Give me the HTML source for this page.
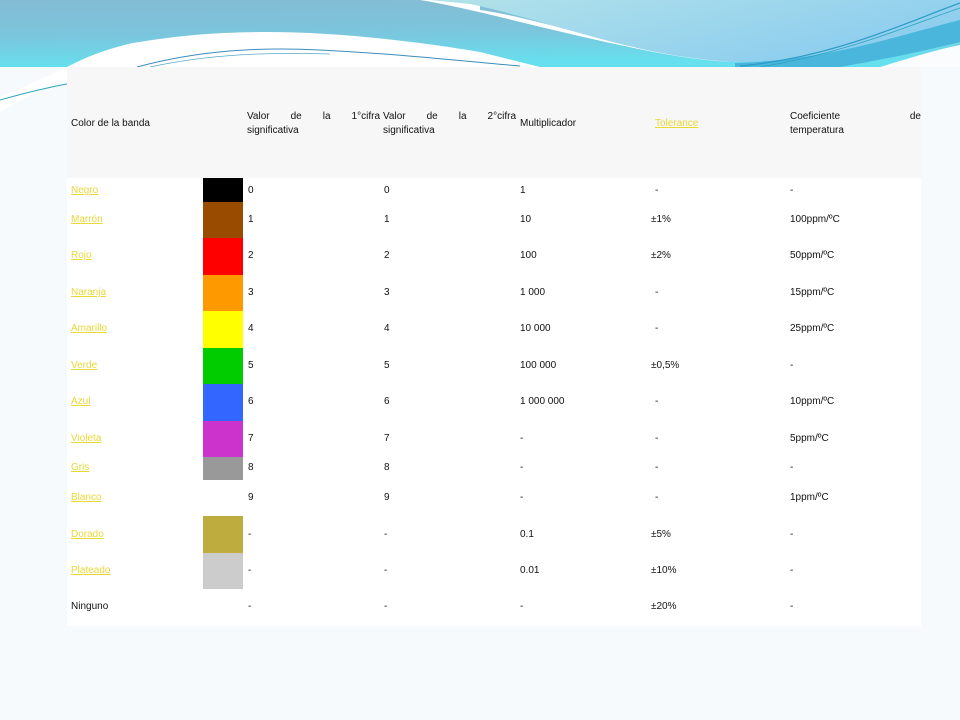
<!DOCTYPE html>
<html><head><meta charset="utf-8"><style>
body{margin:0;width:960px;height:720px;background:#f7fafc;position:relative;overflow:hidden;font-family:"Liberation Sans",sans-serif;font-size:10px;color:#111}
svg{position:absolute;left:0;top:0}
#t{position:absolute;left:67px;top:67px;width:854px;height:559px;background:#fff}
.h{position:absolute;top:0;left:0;width:854px;height:111px;background:#f7f7f7}
.c{position:absolute;white-space:nowrap}
.j{position:absolute;line-height:14px}
.j div:first-child{text-align:justify;text-align-last:justify}
a{color:#e8d838;text-decoration:underline}
.sw{position:absolute;left:136px;width:40px}
.r{position:absolute;font-size:10px}
</style></head><body>
<svg width="960" height="120">
<defs>
<linearGradient id="g1" x1="0" y1="0" x2="0.15" y2="1"><stop offset="0" stop-color="#84bcd4"/><stop offset="0.5" stop-color="#7cc4dc"/><stop offset="1" stop-color="#66e0ee"/></linearGradient>
<linearGradient id="g2" x1="0" y1="0" x2="1" y2="0.5"><stop offset="0" stop-color="#b2e2ea"/><stop offset="1" stop-color="#8ccdee"/></linearGradient>
</defs>
<rect width="960" height="67" fill="url(#g1)"/>
<path d="M0 97 C30 85 50 75 67 67 L67 67 C90 55 110 48 133 43 C180 35 220 32 267 32 C340 32 420 42 480 52 L540 67 L67 67 L67 80 C40 88 20 100 0 112 Z" fill="#fff"/>
<path d="M0 100 C25 93 45 88 67 84" stroke="#2aa8b8" stroke-width="1" fill="none"/>
<path d="M137 67 C200 50 260 47 320 50 C400 54 450 60 520 66" stroke="#3c8cbc" stroke-width="1" fill="none"/>
<path d="M150 67 C210 54 270 52 330 54" stroke="#5aa8cc" stroke-width="0.8" fill="none"/>
<path d="M420 0 C470 8 540 28 620 45 C670 56 700 60 730 62 C700 58 650 50 600 38 C550 25 510 14 480 10 L480 0 Z" fill="#fff"/>
<path d="M430 0 L960 0 L960 28 C900 45 820 62 735 62 C690 60 640 50 590 36 C540 22 500 10 470 4 Z" fill="url(#g2)"/>
<path d="M735 63 C830 60 900 35 960 20 L960 42 C920 52 880 60 840 67 L735 67 Z" fill="#4ab6dc"/>
<path d="M880 67 C910 58 935 50 960 45 L960 67 Z" fill="#fafcfd"/>
<path d="M740 66 C830 58 900 25 960 3" stroke="#2a9cc8" stroke-width="1.2" fill="none"/>
<path d="M760 67 C850 52 910 25 960 8" stroke="#2aa4c0" stroke-width="0.8" fill="none"/>
</svg>
<div id="t">
<div class="h"></div>
<div class="c" style="left:4px;top:51px">Color de la banda</div>
<div class="j" style="left:180px;top:43px;width:133px"><div>Valor de la 1°cifra</div><div>significativa</div></div>
<div class="j" style="left:316px;top:43px;width:133px"><div>Valor de la 2°cifra</div><div>significativa</div></div>
<div class="c" style="left:453px;top:51px">Multiplicador</div>
<div class="c" style="left:588px;top:51px"><a>Tolerance</a></div>
<div class="j" style="left:723px;top:43px;width:131px"><div>Coeficiente de</div><div>temperatura</div></div>

<div class="sw" style="top:111px;height:24px;background:#000"></div>
<div class="sw" style="top:135px;height:36px;background:#994c00"></div>
<div class="sw" style="top:171px;height:37px;background:#ff0000"></div>
<div class="sw" style="top:208px;height:36px;background:#ff9900"></div>
<div class="sw" style="top:244px;height:37px;background:#ffff00"></div>
<div class="sw" style="top:281px;height:36px;background:#00cc00"></div>
<div class="sw" style="top:317px;height:37px;background:#3366ff"></div>
<div class="sw" style="top:354px;height:36px;background:#cc33cc"></div>
<div class="sw" style="top:390px;height:23px;background:#999999"></div>
<div class="sw" style="top:449px;height:37px;background:#bfac3f"></div>
<div class="sw" style="top:486px;height:36px;background:#cccccc"></div>
</div>
<div class="r" style="top:185px;left:71px"><a>Negro</a></div><div class="r" style="top:185px;left:248px">0</div><div class="r" style="top:185px;left:384px">0</div><div class="r" style="top:185px;left:520px">1</div><div class="r" style="top:185px;left:655px">-</div><div class="r" style="top:185px;left:790px">-</div>
<div class="r" style="top:214px;left:71px"><a>Marrón</a></div><div class="r" style="top:214px;left:248px">1</div><div class="r" style="top:214px;left:384px">1</div><div class="r" style="top:214px;left:520px">10</div><div class="r" style="top:214px;left:651px">±1%</div><div class="r" style="top:214px;left:790px">100ppm/ºC</div>
<div class="r" style="top:250px;left:71px"><a>Rojo</a></div><div class="r" style="top:250px;left:248px">2</div><div class="r" style="top:250px;left:384px">2</div><div class="r" style="top:250px;left:520px">100</div><div class="r" style="top:250px;left:651px">±2%</div><div class="r" style="top:250px;left:790px">50ppm/ºC</div>
<div class="r" style="top:287px;left:71px"><a>Naranja</a></div><div class="r" style="top:287px;left:248px">3</div><div class="r" style="top:287px;left:384px">3</div><div class="r" style="top:287px;left:520px">1 000</div><div class="r" style="top:287px;left:655px">-</div><div class="r" style="top:287px;left:790px">15ppm/ºC</div>
<div class="r" style="top:323px;left:71px"><a>Amarillo</a></div><div class="r" style="top:323px;left:248px">4</div><div class="r" style="top:323px;left:384px">4</div><div class="r" style="top:323px;left:520px">10 000</div><div class="r" style="top:323px;left:655px">-</div><div class="r" style="top:323px;left:790px">25ppm/ºC</div>
<div class="r" style="top:360px;left:71px"><a>Verde</a></div><div class="r" style="top:360px;left:248px">5</div><div class="r" style="top:360px;left:384px">5</div><div class="r" style="top:360px;left:520px">100 000</div><div class="r" style="top:360px;left:651px">±0,5%</div><div class="r" style="top:360px;left:790px">-</div>
<div class="r" style="top:396px;left:71px"><a>Azul</a></div><div class="r" style="top:396px;left:248px">6</div><div class="r" style="top:396px;left:384px">6</div><div class="r" style="top:396px;left:520px">1 000 000</div><div class="r" style="top:396px;left:655px">-</div><div class="r" style="top:396px;left:790px">10ppm/ºC</div>
<div class="r" style="top:433px;left:71px"><a>Violeta</a></div><div class="r" style="top:433px;left:248px">7</div><div class="r" style="top:433px;left:384px">7</div><div class="r" style="top:433px;left:520px">-</div><div class="r" style="top:433px;left:655px">-</div><div class="r" style="top:433px;left:790px">5ppm/ºC</div>
<div class="r" style="top:462px;left:71px"><a>Gris</a></div><div class="r" style="top:462px;left:248px">8</div><div class="r" style="top:462px;left:384px">8</div><div class="r" style="top:462px;left:520px">-</div><div class="r" style="top:462px;left:655px">-</div><div class="r" style="top:462px;left:790px">-</div>
<div class="r" style="top:492px;left:71px"><a>Blanco</a></div><div class="r" style="top:492px;left:248px">9</div><div class="r" style="top:492px;left:384px">9</div><div class="r" style="top:492px;left:520px">-</div><div class="r" style="top:492px;left:655px">-</div><div class="r" style="top:492px;left:790px">1ppm/ºC</div>
<div class="r" style="top:529px;left:71px"><a>Dorado</a></div><div class="r" style="top:529px;left:248px">-</div><div class="r" style="top:529px;left:384px">-</div><div class="r" style="top:529px;left:520px">0.1</div><div class="r" style="top:529px;left:651px">±5%</div><div class="r" style="top:529px;left:790px">-</div>
<div class="r" style="top:565px;left:71px"><a>Plateado</a></div><div class="r" style="top:565px;left:248px">-</div><div class="r" style="top:565px;left:384px">-</div><div class="r" style="top:565px;left:520px">0.01</div><div class="r" style="top:565px;left:651px">±10%</div><div class="r" style="top:565px;left:790px">-</div>
<div class="r" style="top:601px;left:71px">Ninguno</div><div class="r" style="top:601px;left:248px">-</div><div class="r" style="top:601px;left:384px">-</div><div class="r" style="top:601px;left:520px">-</div><div class="r" style="top:601px;left:651px">±20%</div><div class="r" style="top:601px;left:790px">-</div>
</body></html>
